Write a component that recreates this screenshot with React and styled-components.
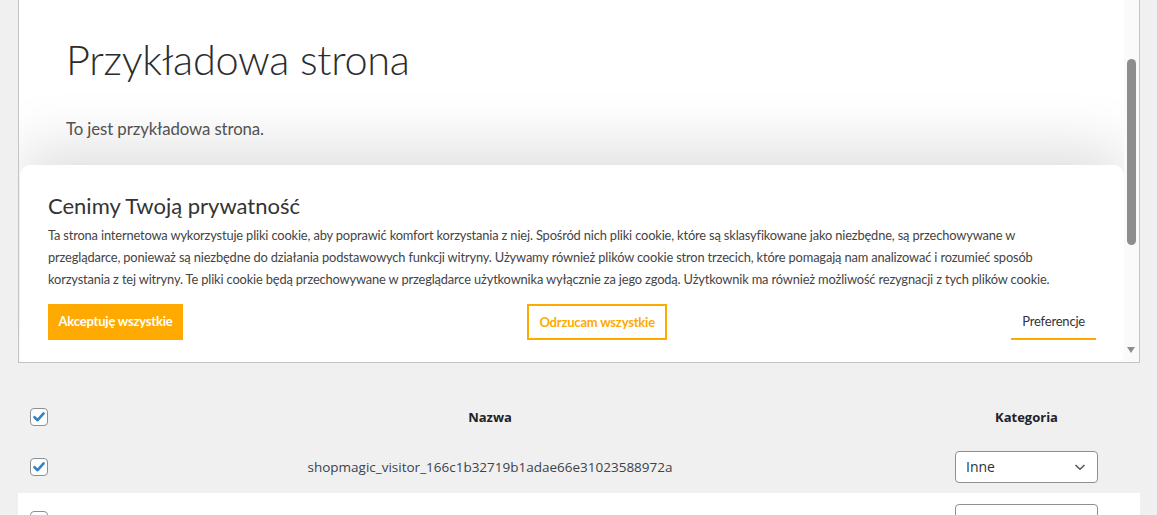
import React from 'react'
import styled, { createGlobalStyle } from 'styled-components'

const GlobalStyle = createGlobalStyle`
  html, body {
    margin: 0;
    padding: 0;
    background: #f0f0f1;
  }
  body {
    font-family: "Open Sans", "Noto Sans", sans-serif;
    color: #3c434a;
  }
`

const ORANGE = '#ffaa00'

const Wrap = styled.div`
  padding: 0 17px 0 18px;
`

const Frame = styled.div`
  display: flex;
  height: 362px;
  border: 1px solid #c3c4c7;
  border-top: none;
  background: #fff;
  overflow: hidden;
`

const Page = styled.div`
  position: relative;
  flex: 1;
  padding: 29px 0 0 47px;
  font-family: Lato, "Open Sans", sans-serif;
`

const PageTitle = styled.h1`
  margin: 0;
  font-size: 41.5px;
  font-weight: 300;
  line-height: 60px;
  color: #2c2c2c;
  letter-spacing: -0.3px;
`

const PageText = styled.p`
  margin: 29px 0 0;
  font-size: 16.8px;
  color: #555;
  letter-spacing: -0.1px;
`

const Scrollbar = styled.div`
  position: relative;
  width: 15px;
  background: #fafafa;
`

const Thumb = styled.div`
  margin: 59px 0 0 3px;
  width: 9px;
  height: 186px;
  border-radius: 5px;
  background: #8d8d8d;
`

const ArrowDown = styled.div`
  position: absolute;
  left: 3px;
  bottom: 9px;
  width: 0;
  height: 0;
  border-left: 4.5px solid transparent;
  border-right: 4.5px solid transparent;
  border-top: 6px solid #8d8d8d;
`

const Banner = styled.div`
  position: absolute;
  left: 1px;
  right: 0;
  bottom: -2px;
  height: 199px;
  box-sizing: border-box;
  padding: 26px 28px 0;
  background: #fff;
  border-radius: 10px;
  box-shadow: 0 -18px 60px rgba(0, 0, 0, 0.13);
`

const BannerTitle = styled.h2`
  margin: 0;
  font-size: 22px;
  font-weight: 400;
  line-height: 30px;
  color: #333;
`

const BannerText = styled.p`
  margin: 3px 0 0;
  max-width: 1022px;
  font-size: 12.85px;
  line-height: 22px;
  color: #444;
  letter-spacing: -0.15px;
`

const Actions = styled.div`
  display: flex;
  justify-content: space-between;
  align-items: center;
  margin-top: 14px;
`

const Button = styled.button`
  height: 36px;
  box-sizing: border-box;
  padding: 0 ${p => p.$pad}px;
  font-family: Lato, sans-serif;
  font-size: 13px;
  font-weight: ${p => (p.$variant === 'link' ? 400 : 700)};
  letter-spacing: -0.2px;
  cursor: pointer;
  border-radius: 0;
  background: ${p => (p.$variant === 'solid' ? ORANGE : '#fff')};
  color: ${p => (p.$variant === 'solid' ? '#fff' : p.$variant === 'outline' ? ORANGE : '#333')};
  border: ${p => (p.$variant === 'outline' ? `2px solid ${ORANGE}` : 'none')};
  border-bottom: 2px solid ${p => (p.$variant === 'solid' ? 'transparent' : ORANGE)};
`

const Table = styled.div`
  margin-top: 31px;
`

const Row = styled.div`
  display: grid;
  grid-template-columns: 42px 860px 1fr;
  align-items: center;
  height: ${p => p.$h}px;
  background: ${p => (p.$white ? '#fff' : 'transparent')};
  font-size: 13px;
`

const CheckCell = styled.div`
  padding-left: 12px;
  display: flex;
`

const Cell = styled.div`
  text-align: center;
  color: ${p => (p.$head ? '#1d2327' : '#3c434a')};
  font-weight: ${p => (p.$head ? 700 : 400)};
  font-size: ${p => (p.$head ? 13 : 13.5)}px;
`

const CatCell = styled(Cell)`
  padding: 0 42px 0 35px;
`

const Box = styled.span`
  width: 16px;
  height: 16px;
  border: 1px solid #8c8f94;
  border-radius: 4px;
  background: #fff;
  display: flex;
  align-items: center;
  justify-content: center;
`

const Select = styled.div`
  height: 32px;
  box-sizing: border-box;
  border: 1px solid #8c8f94;
  border-radius: 4px;
  background: #fff;
  display: flex;
  align-items: center;
  justify-content: space-between;
  padding: 0 10px;
  font-size: 14px;
  color: #2c3338;
  text-align: left;
`

const Check = ({ on }) => (
  <Box>
    {on && (
      <svg width="14" height="14" viewBox="0 0 14 14">
        <path d="M2.5 7.2 L5.6 10.2 L11.6 3.4" fill="none" stroke="#3582c4" strokeWidth="2.6" strokeLinecap="round" strokeLinejoin="round" />
      </svg>
    )}
  </Box>
)

const Chevron = () => (
  <svg width="14" height="14" viewBox="0 0 14 14">
    <path d="M2.5 5 L7 9.3 L11.5 5" fill="none" stroke="#50575e" strokeWidth="1.5" />
  </svg>
)

const App = () => (
  <>
    <GlobalStyle />
    <Wrap>
      <Frame>
        <Page>
          <PageTitle>Przykładowa strona</PageTitle>
          <PageText>To jest przykładowa strona.</PageText>
          <Banner>
            <BannerTitle>Cenimy Twoją prywatność</BannerTitle>
            <BannerText>
              Ta strona internetowa wykorzystuje pliki cookie, aby poprawić komfort korzystania z niej. Spośród nich pliki cookie, które są sklasyfikowane jako niezbędne, są przechowywane w przeglądarce, ponieważ są niezbędne do działania podstawowych funkcji witryny. Używamy również plików cookie stron trzecich, które pomagają nam analizować i rozumieć sposób korzystania z tej witryny. Te pliki cookie będą przechowywane w przeglądarce użytkownika wyłącznie za jego zgodą. Użytkownik ma również możliwość rezygnacji z tych plików cookie.
            </BannerText>
            <Actions>
              <Button $variant="solid" $pad={10.5}>Akceptuję wszystkie</Button>
              <Button $variant="outline" $pad={10.5}>Odrzucam wszystkie</Button>
              <Button $variant="link" $pad={11}>Preferencje</Button>
            </Actions>
          </Banner>
        </Page>
        <Scrollbar>
          <Thumb />
          <ArrowDown />
        </Scrollbar>
      </Frame>
      <Table>
        <Row $h={46}>
          <CheckCell><Check on /></CheckCell>
          <Cell $head>Nazwa</Cell>
          <CatCell $head>Kategoria</CatCell>
        </Row>
        <Row $h={53}>
          <CheckCell><Check on /></CheckCell>
          <Cell>shopmagic_visitor_166c1b32719b1adae66e31023588972a</Cell>
          <CatCell><Select>Inne<Chevron /></Select></CatCell>
        </Row>
        <Row $h={53} $white>
          <CheckCell><Check /></CheckCell>
          <Cell />
          <CatCell><Select /></CatCell>
        </Row>
      </Table>
    </Wrap>
  </>
)

export default App
